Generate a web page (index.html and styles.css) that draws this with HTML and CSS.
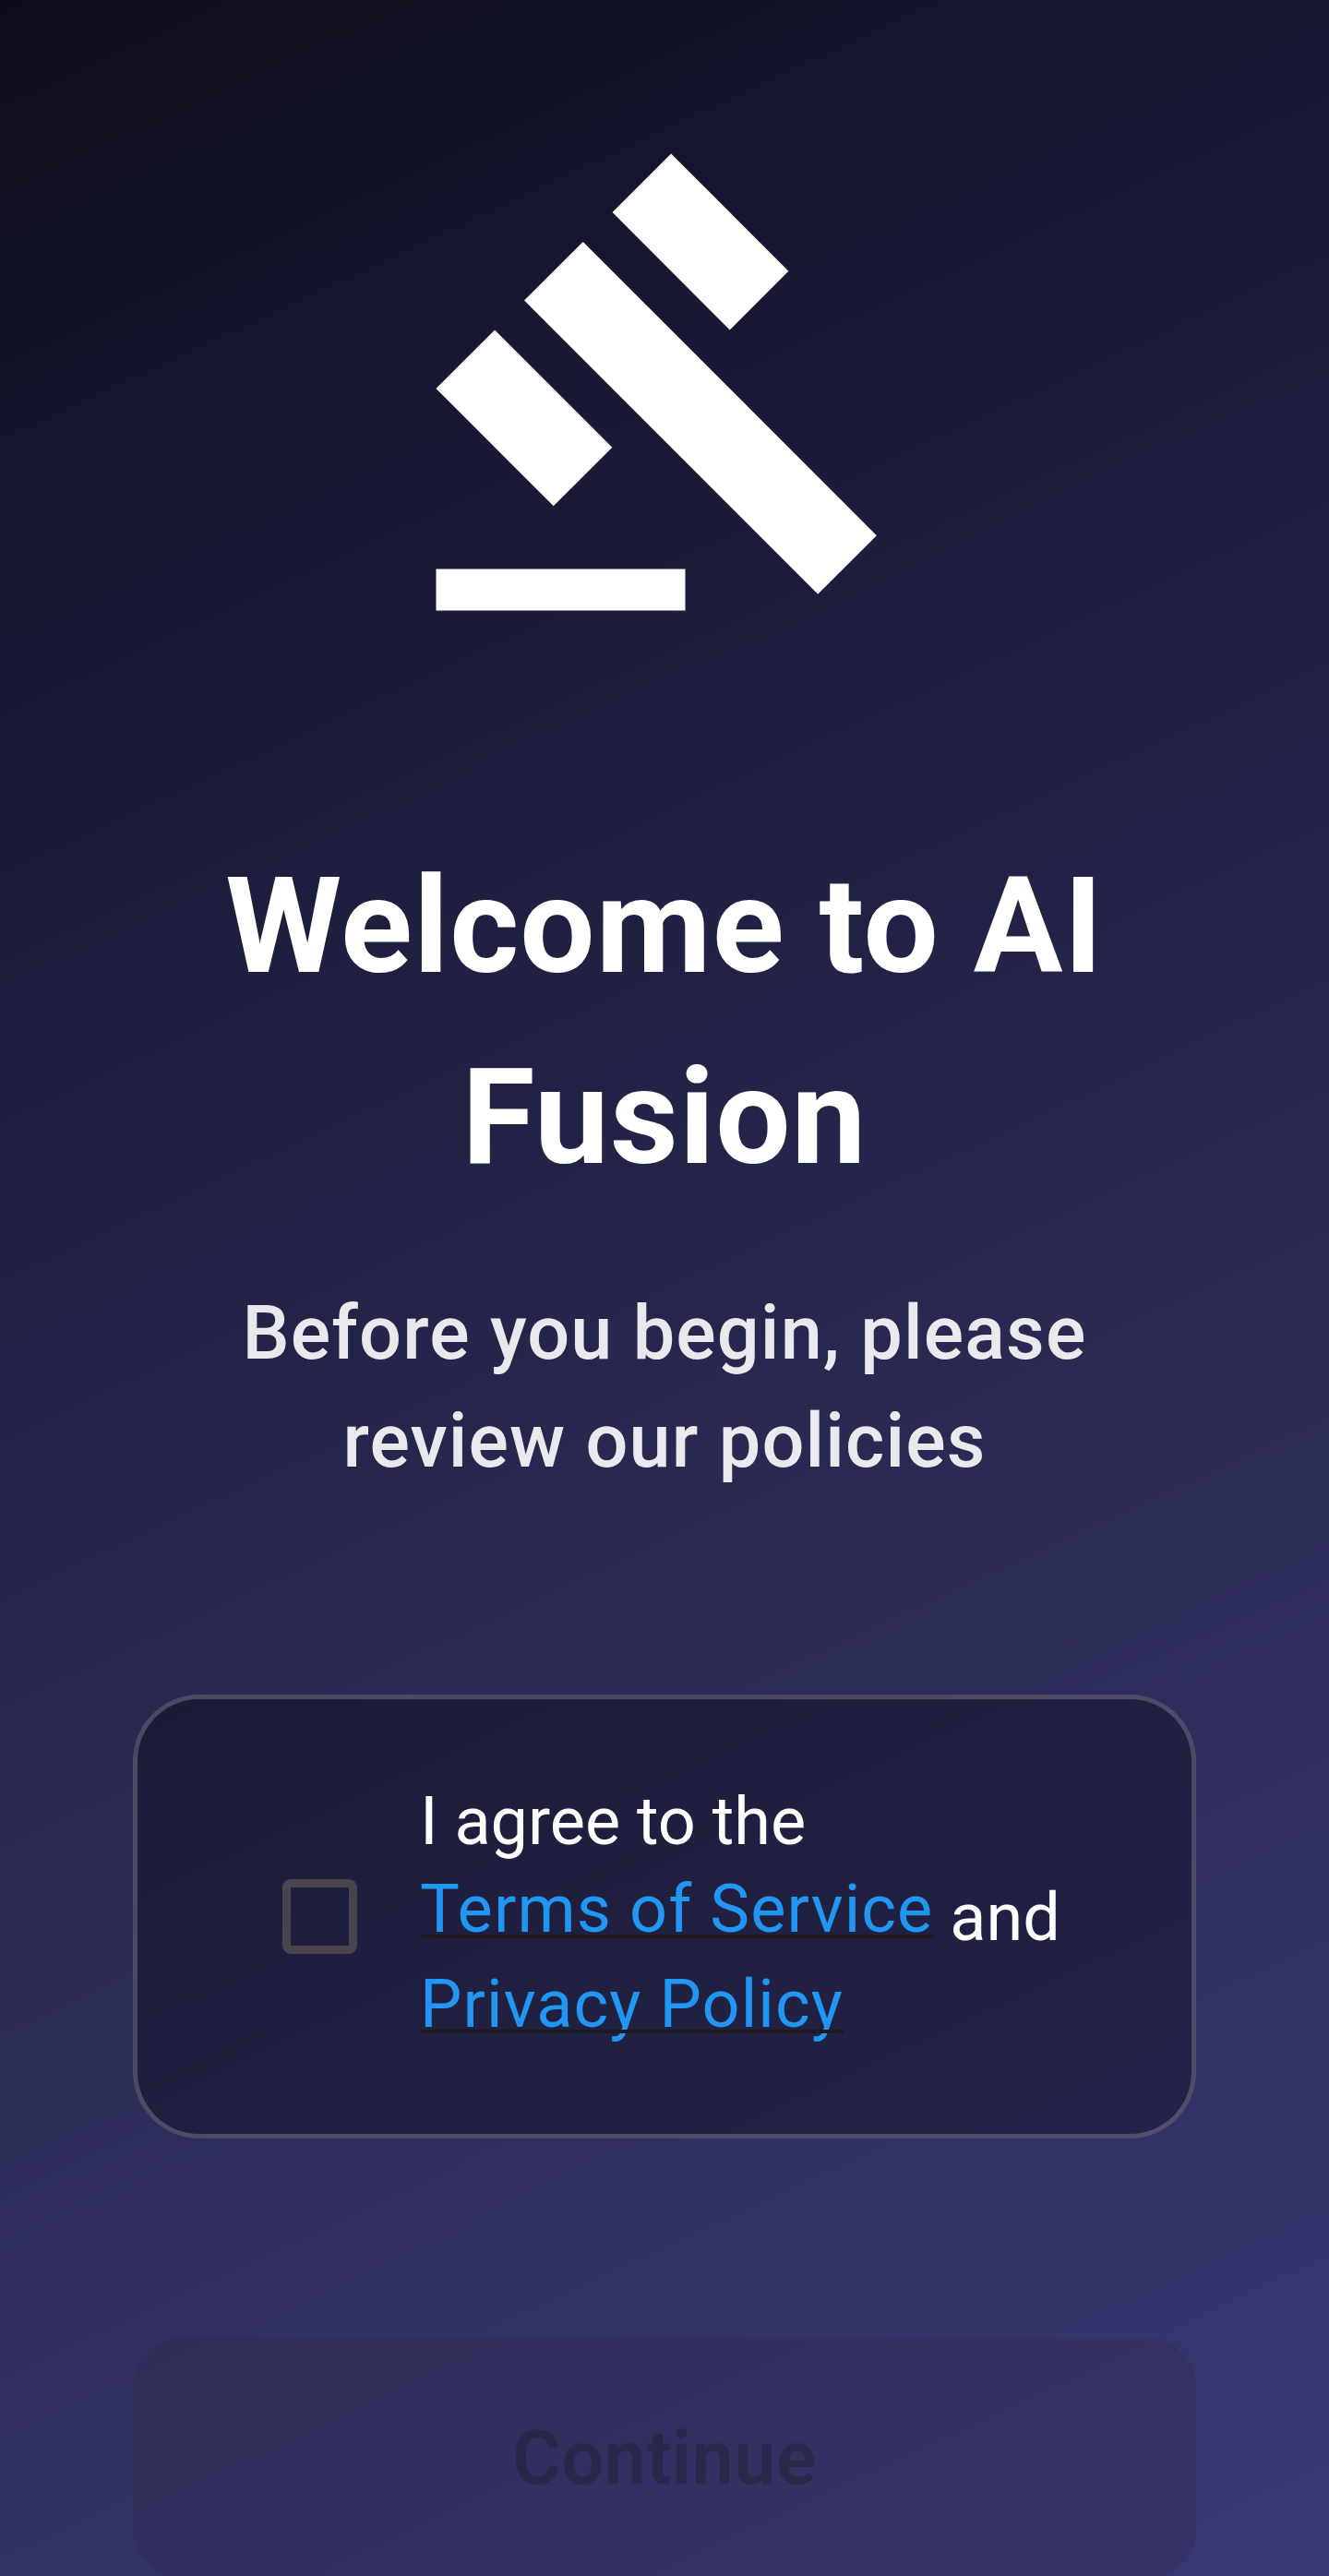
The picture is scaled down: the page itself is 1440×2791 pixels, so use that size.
FILE: index.html
```
<!DOCTYPE html>
<html lang="en">
<head>
    <meta charset="UTF-8">
    <meta name="viewport" content="width=device-width, initial-scale=1.0">
    <title>Welcome to AI Fusion</title>
    <link rel="stylesheet" href="styles.css">
</head>
<body>
<div class="container">
    <svg class="logo" viewBox="0 0 24 24" fill="currentColor">
        <path d="M1 21h12v2H1zM5.245 8.07l2.83-2.827 14.14 14.142-2.828 2.828zM12.317 1l5.657 5.656-2.83 2.83-5.654-5.66zM3.825 9.485l5.657 5.657-2.828 2.828-5.657-5.657z"/>
    </svg>

    <h1>Welcome to AI<br>Fusion</h1>
    <p class="subtitle">Before you begin, please<br>review our policies</p>

    <!-- Policy agreement -->
    <div class="agreement">
        <input type="checkbox" id="agree" class="checkbox">
        <p class="agreement-text">
            <label for="agree">I agree to the</label><br>
            <a href="#">Terms of Service</a> and<br>
            <a href="#">Privacy Policy</a>
        </p>
    </div>

    <button type="button" class="continue" disabled>Continue</button>
</div>
</body>
</html>
```

FILE: styles.css
```
* {
    box-sizing: border-box;
}
body {
    font-family: Roboto, sans-serif;
    color: white;
    margin: 0;
    height: 2791px;
    overflow: hidden;
    background: linear-gradient(155deg, #0d0d1a 0%, #181833 20%, #212144 40%, #2a2a54 60%, #323164 80%, #3a3875 100%);
}
.container {
    display: flex;
    flex-direction: column;
    align-items: center;
    padding: 144px 144px 0;
    text-align: center;
}
.logo {
    width: 540px;
    height: 540px;
}
h1 {
    margin: 216px 0 0;
    font-size: 144px;
    font-weight: 700;
    line-height: 207px;
    letter-spacing: 1.125px;
}
.subtitle {
    margin: 72px 0 0;
    font-size: 81px;
    font-weight: 500;
    line-height: 117px;
    letter-spacing: 1.125px;
    color: rgba(255, 255, 255, 0.9);
}
.agreement {
    display: flex;
    align-items: center;
    gap: 68px;
    width: 100%;
    height: 481px;
    margin-top: 216px;
    padding-left: 157px;
    border: 5px solid rgba(255, 255, 255, 0.2);
    border-radius: 72px;
    background: rgba(0, 0, 0, 0.3);
    text-align: left;
}
.checkbox {
    appearance: none;
    flex: none;
    width: 81px;
    height: 81px;
    margin: 0;
    border: 9px solid #49454f;
    border-radius: 9px;
}
.agreement-text {
    margin: 0;
    padding-top: 2px;
    font-size: 72px;
    line-height: 103.5px;
    white-space: nowrap;
}
.agreement-text a {
    display: inline-block;
    position: relative;
    line-height: 1;
    vertical-align: 9px;
    letter-spacing: 1.125px;
    color: #2196f3;
    text-decoration: none;
}
/* underline runs over the descenders */
.agreement-text a::after {
    content: "";
    position: absolute;
    left: 0;
    right: 0;
    bottom: 5px;
    height: 4px;
    background: #1d1b20;
}
.continue {
    flex: none;
    width: 100%;
    height: 261px;
    margin-top: 216px;
    padding: 0;
    border: none;
    border-radius: 54px;
    background: rgba(29, 27, 32, 0.12);
    font-family: inherit;
    font-size: 81px;
    font-weight: 600;
    letter-spacing: 0.45px;
    color: rgba(29, 27, 32, 0.38);
}
```
